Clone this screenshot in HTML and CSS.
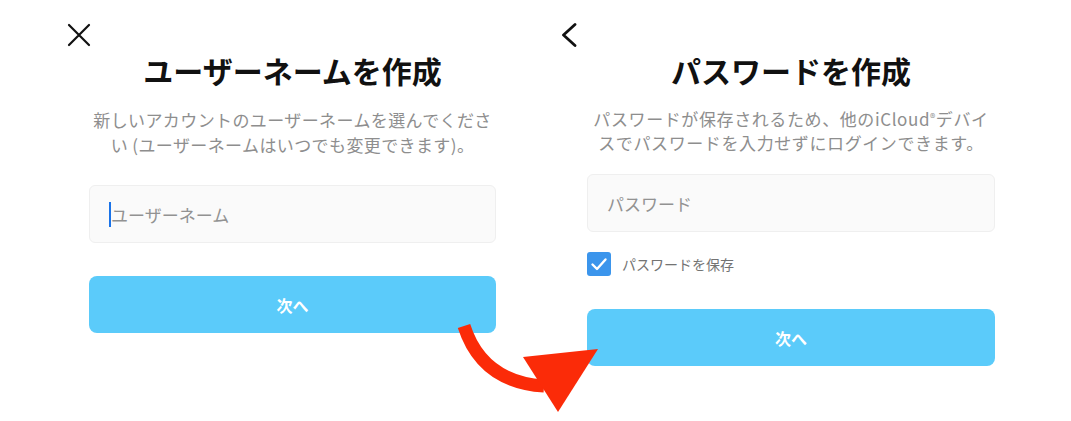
FILE: index.html
```html
<!DOCTYPE html>
<html lang="ja">
<head>
    <meta charset="UTF-8">
    <meta name="viewport" content="width=device-width, initial-scale=1.0">
    <title>アカウント作成</title>
    <link rel="stylesheet" href="styles.css">
</head>
<body>
    <div class="page">
        <!-- step 1: username -->
        <div class="panel">
            <div class="nav-icon close-icon">
                <svg width="24" height="24" viewBox="0 0 24 24">
                    <path d="M2 2 L22 22 M22 2 L2 22" stroke="#111" stroke-width="2.2" fill="none" stroke-linecap="round"/>
                </svg>
            </div>
            <h1 class="title">ユーザーネームを作成</h1>
            <p class="desc">新しいアカウントのユーザーネームを選んでくださ<br>い (ユーザーネームはいつでも変更できます)。</p>
            <div class="field">
                <span class="caret"></span><span class="placeholder">ユーザーネーム</span>
            </div>
            <button class="next-button">次へ</button>
        </div>

        <!-- step 2: password -->
        <div class="panel panel-password">
            <div class="nav-icon back-icon">
                <svg width="24" height="24" viewBox="0 0 24 24">
                    <path d="M16 1.5 L4.5 12 L16 22.5" stroke="#111" stroke-width="2.8" fill="none" stroke-linecap="round" stroke-linejoin="round"/>
                </svg>
            </div>
            <h1 class="title">パスワードを作成</h1>
            <p class="desc">パスワードが保存されるため、他のiCloud<span class="reg">®</span>デバイ<br>スでパスワードを入力せずにログインできます。</p>
            <div class="field">
                <span class="placeholder">パスワード</span>
            </div>
            <label class="save-row">
                <span class="checkbox">
                    <svg width="24" height="24" viewBox="0 0 24 24">
                        <path d="M5.5 12.5 L10 17 L18.5 7.5" stroke="#fff" stroke-width="2.4" fill="none" stroke-linecap="round" stroke-linejoin="round"/>
                    </svg>
                </span>
                パスワードを保存
            </label>
            <button class="next-button">次へ</button>
        </div>

        <!-- red arrow between the two screens -->
        <svg class="arrow" width="180" height="111" viewBox="0 0 180 111">
            <path d="M24 16 Q 42 72 104 76" stroke="#fb2b08" stroke-width="13" fill="none"/>
            <polygon points="83,47 158,39 118,102" fill="#fb2b08"/>
        </svg>
    </div>
</body>
</html>
```

FILE: styles.css
```css
body {
    margin: 0;
    background-color: #fff;
    font-family: "Noto Sans CJK JP", "Noto Sans", sans-serif;
}
.page {
    position: relative;
    display: flex;
    gap: 91px;
    padding-left: 89px;
    height: 421px;
    overflow: hidden;
}
.panel {
    display: flex;
    flex-direction: column;
    width: 407px;
}
.panel-password {
    width: 408px;
}
.nav-icon {
    height: 24px;
    margin-top: 23px;
}
.close-icon {
    margin-left: -22px;
}
.back-icon {
    margin-left: -28px;
}
.nav-icon svg {
    display: block;
}
.title {
    margin: 5px 0 0;
    font-size: 30px;
    line-height: 36px;
    font-weight: 700;
    color: #111;
    text-align: center;
}
.desc {
    margin: 19px 0 0;
    font-size: 17px;
    line-height: 25px;
    letter-spacing: 0.4px;
    color: #8e8e8e;
    text-align: center;
}
.panel-password .desc {
    margin-top: 17px;
    line-height: 24px;
    letter-spacing: 0.6px;
}
.reg {
    font-size: 11px;
    vertical-align: 4px;
}
.field {
    display: flex;
    align-items: center;
    height: 56px;
    margin-top: 28px;
    padding-left: 19px;
    background-color: #fafafa;
    border: 1px solid #efefef;
    border-radius: 6px;
}
.panel-password .field {
    margin-top: 19px;
}
.caret {
    width: 2px;
    height: 25px;
    background-color: #1a73e8;
}
.placeholder {
    font-size: 17px;
    color: #929292;
}
.save-row {
    display: flex;
    align-items: center;
    gap: 11px;
    margin-top: 20px;
    font-size: 14px;
    color: #737373;
}
.checkbox {
    width: 24px;
    height: 24px;
    border-radius: 3px;
    background-color: #3b95ec;
}
.checkbox svg {
    display: block;
}
.next-button {
    height: 57px;
    margin-top: 33px;
    border: none;
    border-radius: 8px;
    background-color: #5bcbfa;
    color: #fff;
    font-family: inherit;
    font-size: 16px;
    font-weight: 700;
}
.arrow {
    position: absolute;
    left: 440px;
    top: 310px;
}
```
